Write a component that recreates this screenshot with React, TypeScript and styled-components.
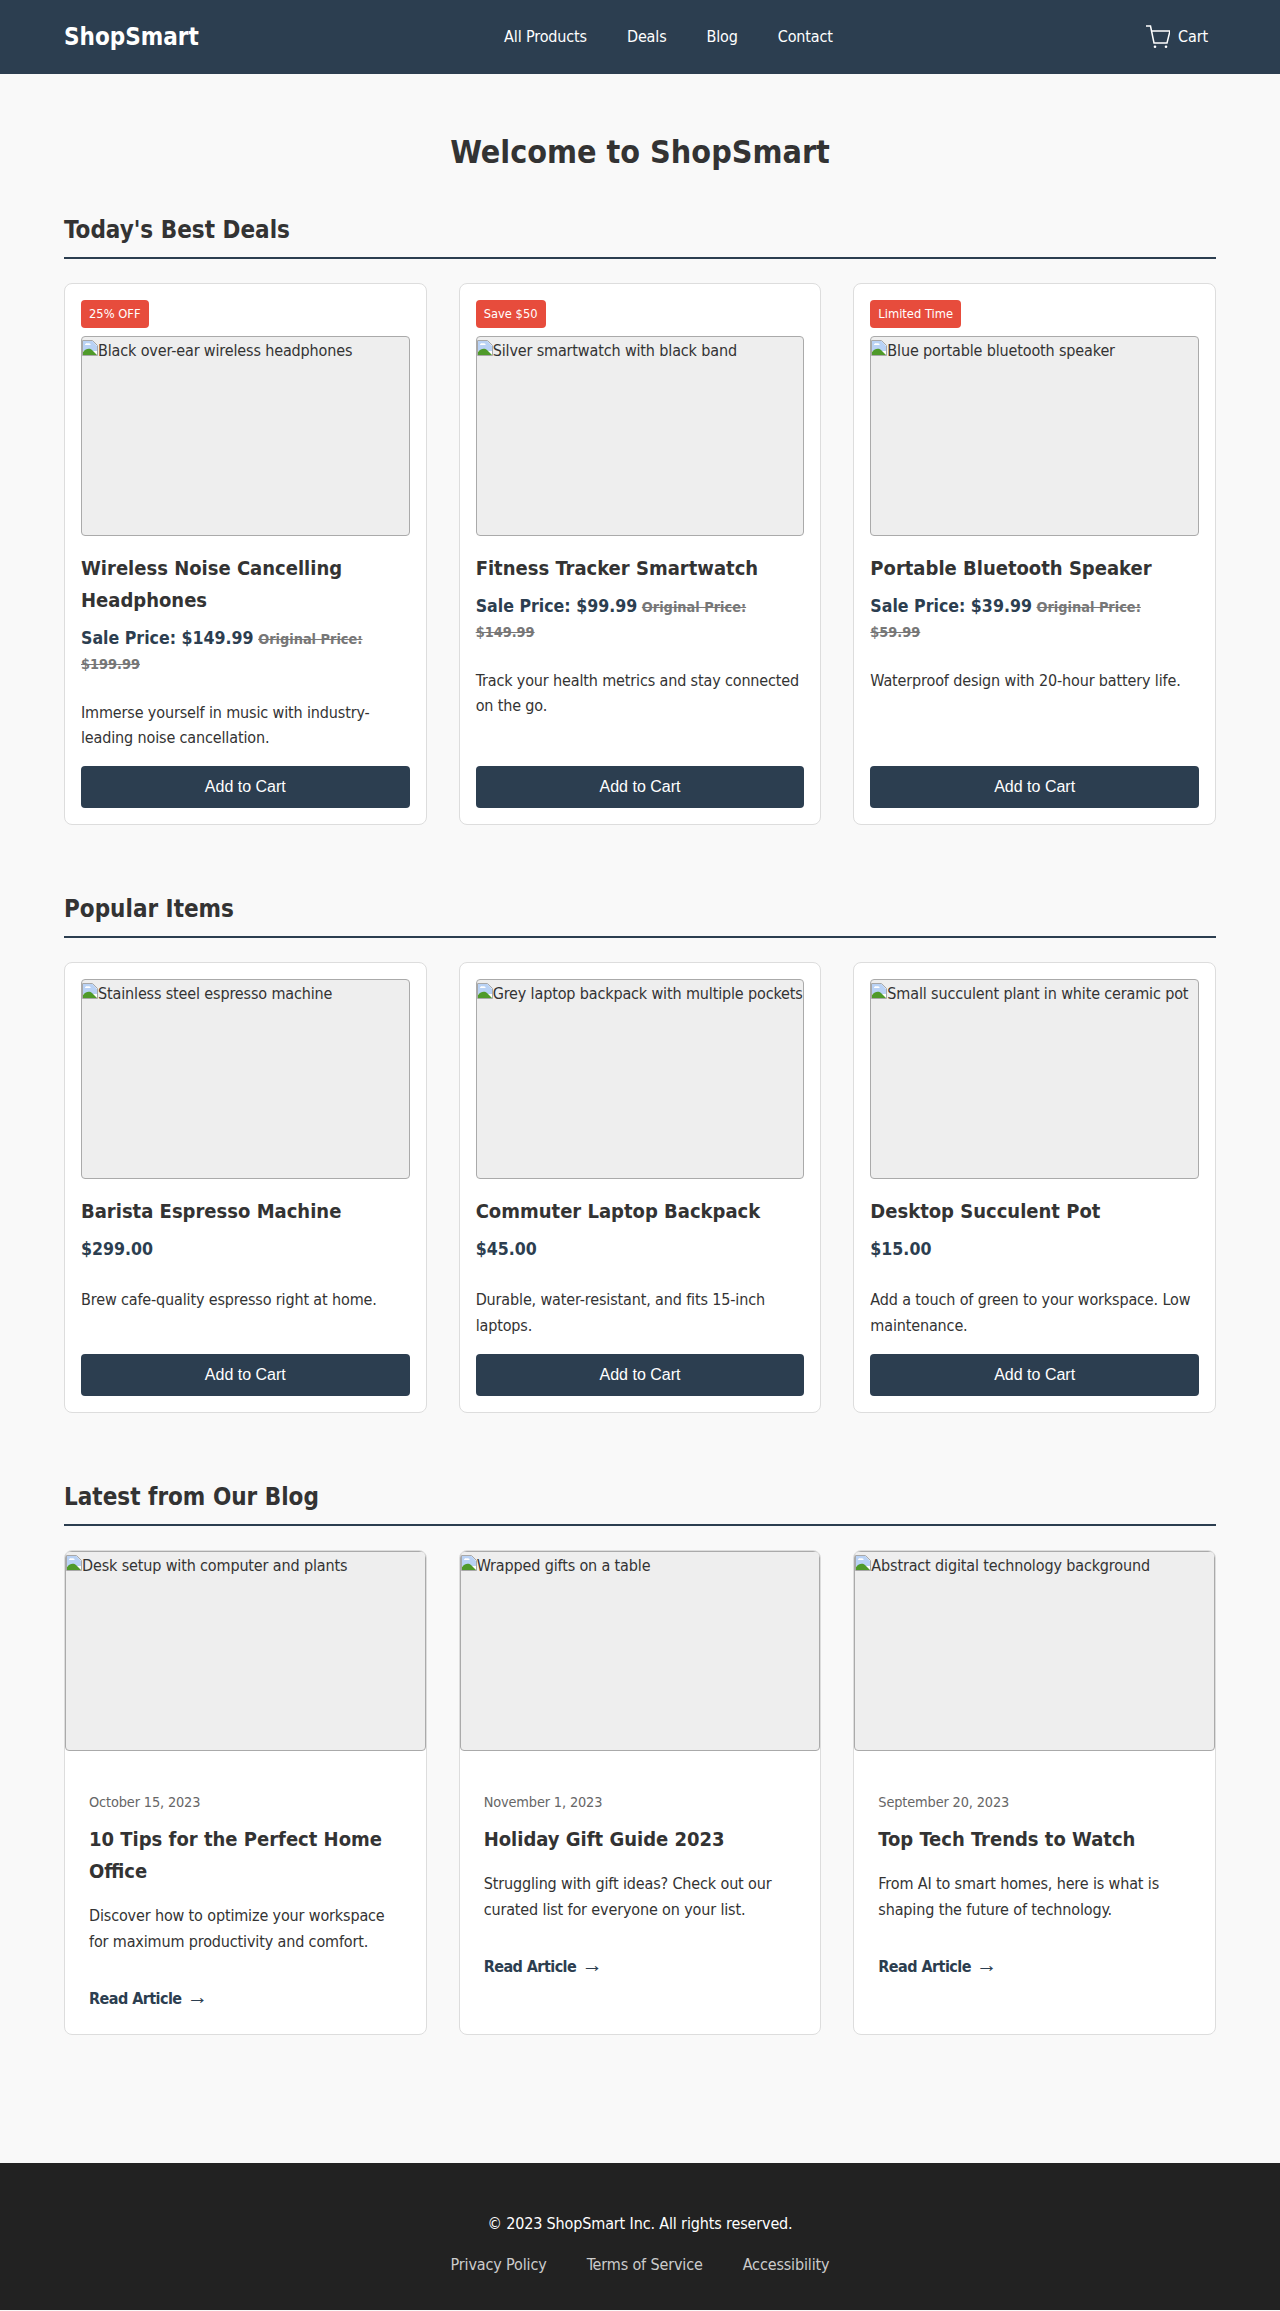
import React from "react";
import styled, { createGlobalStyle } from "styled-components";

const GlobalStyle = createGlobalStyle`
  * { box-sizing: border-box; }
  body {
    margin: 0;
    background: #f9f9f9;
    color: #333;
    font-family: "DejaVu Sans Condensed", "DejaVu Sans", sans-serif;
    font-size: 16px;
    line-height: 1.6;
    letter-spacing: -0.14px;
  }
`;

const Header = styled.header`
  display: flex;
  align-items: center;
  justify-content: space-between;
  height: 74px;
  padding: 0 64px;
  background: #2c3e50;
  color: #fff;
`;

const Logo = styled.div`
  font-size: 24px;
  font-weight: 700;
  letter-spacing: 0;
`;

const Nav = styled.nav`
  display: flex;
  gap: 40px;
  margin-right: 8px;
`;

const NavLink = styled.a`
  color: #fff;
`;

const CartLink = styled.a`
  display: flex;
  align-items: center;
  gap: 8px;
  padding-right: 8px;
  color: #fff;
`;

const Main = styled.main`
  padding: 53.44px 64px 32px;
`;

const PageTitle = styled.h1`
  margin: 0 0 32px;
  font-size: 32px;
  letter-spacing: 0;
  text-align: center;
`;

const Section = styled.section`
  margin-bottom: 65px;
`;

const SectionTitle = styled.h2`
  margin: 0 0 24px;
  padding-bottom: 8px;
  border-bottom: 2px solid #2c3e50;
  font-size: 24px;
  letter-spacing: 0;
`;

const CardGrid = styled.div`
  display: grid;
  grid-template-columns: repeat(3, minmax(0, 1fr));
  gap: 32px;
`;

const ProductCard = styled.article`
  display: flex;
  flex-direction: column;
  align-items: flex-start;
  padding: 16px;
  background: #fff;
  border: 1px solid #ddd;
  border-radius: 8px;
`;

const Badge = styled.span`
  margin-bottom: 8px;
  padding: 4px 8px;
  background: #e74c3c;
  border-radius: 4px;
  color: #fff;
  font-size: 12.8px;
  letter-spacing: 0;
`;

const ImageBox = styled.div`
  align-self: stretch;
  height: 200px;
  flex-shrink: 0;
  overflow: hidden;
  padding-top: 1px;
  background: #eee;
  border: 1px solid #aaa;
  border-radius: 4px;
  white-space: nowrap;
`;

const BrokenIcon = styled.svg`
  width: 16px;
  height: 16px;
  vertical-align: baseline;
`;

const ProductName = styled.h3`
  margin: 16px 0 8px;
  font-size: 20px;
  letter-spacing: 0;
`;

const Price = styled.p`
  margin: 0 0 24px;
  color: #2c3e50;
  font-size: 14.4px;
  font-weight: 700;
  letter-spacing: 0;
`;

const SalePrice = styled.span`
  font-size: 17.6px;
`;

const OldPrice = styled.span`
  color: #777;
  text-decoration: line-through;
`;

const Description = styled.p`
  flex-grow: 1;
  margin: 0 0 15px;
`;

const AddButton = styled.button`
  align-self: stretch;
  height: 42px;
  background: #2c3e50;
  border: 0;
  border-radius: 4px;
  color: #fff;
  font-family: "Liberation Sans", Arial, sans-serif;
  font-size: 16px;
`;

const BlogCard = styled.article`
  display: flex;
  flex-direction: column;
  background: #fff;
  border: 1px solid #ddd;
  border-radius: 8px;
  overflow: hidden;
`;

const BlogBody = styled.div`
  display: flex;
  flex-direction: column;
  align-items: flex-start;
  padding: 40px 24px 22px;
`;

const BlogDate = styled.div`
  margin-bottom: 9px;
  color: #666;
  font-size: 14.4px;
`;

const BlogTitle = styled.h3`
  margin: 0 0 16px;
  font-size: 20px;
  letter-spacing: 0;
`;

const BlogExcerpt = styled.p`
  margin: 0 0 32px;
`;

const ReadLink = styled.a`
  color: #2c3e50;
  font-weight: 700;
  letter-spacing: -0.55px;
  line-height: 25.6px;
`;

const Arrow = styled.span`
  margin-left: 1px;
  font-family: "Liberation Serif", serif;
  font-size: 21px;
  font-weight: 400;
  line-height: 1;
`;

const Footer = styled.footer`
  display: flex;
  flex-direction: column;
  align-items: center;
  gap: 16px;
  margin-top: 31px;
  height: 147px;
  padding: 48px 32px 0;
  background: #222;
  color: #fff;
`;

const FooterLinks = styled.div`
  display: flex;
  gap: 40px;
`;

const FooterLink = styled.a`
  color: #ccc;
`;

const deals = [
  { badge: "25% OFF", alt: "Black over-ear wireless headphones", name: "Wireless Noise Cancelling Headphones", sale: "$149.99", old: "$199.99", text: "Immerse yourself in music with industry-leading noise cancellation." },
  { badge: "Save $50", alt: "Silver smartwatch with black band", name: "Fitness Tracker Smartwatch", sale: "$99.99", old: "$149.99", text: "Track your health metrics and stay connected on the go." },
  { badge: "Limited Time", alt: "Blue portable bluetooth speaker", name: "Portable Bluetooth Speaker", sale: "$39.99", old: "$59.99", text: "Waterproof design with 20-hour battery life." },
];

const popular = [
  { alt: "Stainless steel espresso machine", name: "Barista Espresso Machine", price: "$299.00", text: "Brew cafe-quality espresso right at home." },
  { alt: "Grey laptop backpack with multiple pockets", name: "Commuter Laptop Backpack", price: "$45.00", text: "Durable, water-resistant, and fits 15-inch laptops." },
  { alt: "Small succulent plant in white ceramic pot", name: "Desktop Succulent Pot", price: "$15.00", text: "Add a touch of green to your workspace. Low maintenance." },
];

const posts = [
  { alt: "Desk setup with computer and plants", date: "October 15, 2023", title: "10 Tips for the Perfect Home Office", text: "Discover how to optimize your workspace for maximum productivity and comfort." },
  { alt: "Wrapped gifts on a table", date: "November 1, 2023", title: "Holiday Gift Guide 2023", text: "Struggling with gift ideas? Check out our curated list for everyone on your list." },
  { alt: "Abstract digital technology background", date: "September 20, 2023", title: "Top Tech Trends to Watch", text: "From AI to smart homes, here is what is shaping the future of technology." },
];

const CartIcon = () => (
  <svg width="24" height="24" viewBox="0 0 24 24" fill="none" stroke="#fff" strokeWidth="1.5">
    <path d="M0 1h4.500l3.500 17h13l3-12H5.500" />
    <circle cx="9" cy="21.800" r="1.300" fill="#fff" stroke="none" />
    <circle cx="20" cy="21.800" r="1.300" fill="#fff" stroke="none" />
  </svg>
);

const Placeholder = ({ alt }: { alt: string }) => (
  <ImageBox>
    <BrokenIcon viewBox="0 0 16 16">
      <path d="M.5.500h10l5 5v10H.5z" fill="#fff" stroke="#a8a8a8" />
      <path d="M1 1h9.500l4.500 5v5H1z" fill="#b9d2f5" />
      <path d="M3 5c0-2 2-2 3-1.500 1.500-.5 3 .5 2.500 1.500z" fill="#fff" />
      <path d="M1 15v-3c3-4 7-4 9-2l5 5z" fill="#4f9a2a" />
    </BrokenIcon>
    {alt}
  </ImageBox>
);

export default function App() {
  return (
    <>
      <GlobalStyle />
      <Header>
        <Logo>ShopSmart</Logo>
        <Nav>
          <NavLink>All Products</NavLink>
          <NavLink>Deals</NavLink>
          <NavLink>Blog</NavLink>
          <NavLink>Contact</NavLink>
        </Nav>
        <CartLink>
          <CartIcon />
          Cart
        </CartLink>
      </Header>
      <Main>
        <PageTitle>Welcome to ShopSmart</PageTitle>
        <Section>
          <SectionTitle>Today's Best Deals</SectionTitle>
          <CardGrid>
            {deals.map((d) => (
              <ProductCard key={d.name}>
                <Badge>{d.badge}</Badge>
                <Placeholder alt={d.alt} />
                <ProductName>{d.name}</ProductName>
                <Price>
                  <SalePrice>Sale Price: {d.sale}</SalePrice>{" "}
                  <OldPrice>
                    Original Price:
                    <br />
                    {d.old}
                  </OldPrice>
                </Price>
                <Description>{d.text}</Description>
                <AddButton>Add to Cart</AddButton>
              </ProductCard>
            ))}
          </CardGrid>
        </Section>
        <Section>
          <SectionTitle>Popular Items</SectionTitle>
          <CardGrid>
            {popular.map((p) => (
              <ProductCard key={p.name}>
                <Placeholder alt={p.alt} />
                <ProductName>{p.name}</ProductName>
                <Price>
                  <SalePrice>{p.price}</SalePrice>
                </Price>
                <Description>{p.text}</Description>
                <AddButton>Add to Cart</AddButton>
              </ProductCard>
            ))}
          </CardGrid>
        </Section>
        <Section>
          <SectionTitle>Latest from Our Blog</SectionTitle>
          <CardGrid>
            {posts.map((p) => (
              <BlogCard key={p.title}>
                <Placeholder alt={p.alt} />
                <BlogBody>
                  <BlogDate>{p.date}</BlogDate>
                  <BlogTitle>{p.title}</BlogTitle>
                  <BlogExcerpt>{p.text}</BlogExcerpt>
                  <ReadLink>
                    Read Article <Arrow>→</Arrow>
                  </ReadLink>
                </BlogBody>
              </BlogCard>
            ))}
          </CardGrid>
        </Section>
      </Main>
      <Footer>
        <div>© 2023 ShopSmart Inc. All rights reserved.</div>
        <FooterLinks>
          <FooterLink>Privacy Policy</FooterLink>
          <FooterLink>Terms of Service</FooterLink>
          <FooterLink>Accessibility</FooterLink>
        </FooterLinks>
      </Footer>
    </>
  );
}
